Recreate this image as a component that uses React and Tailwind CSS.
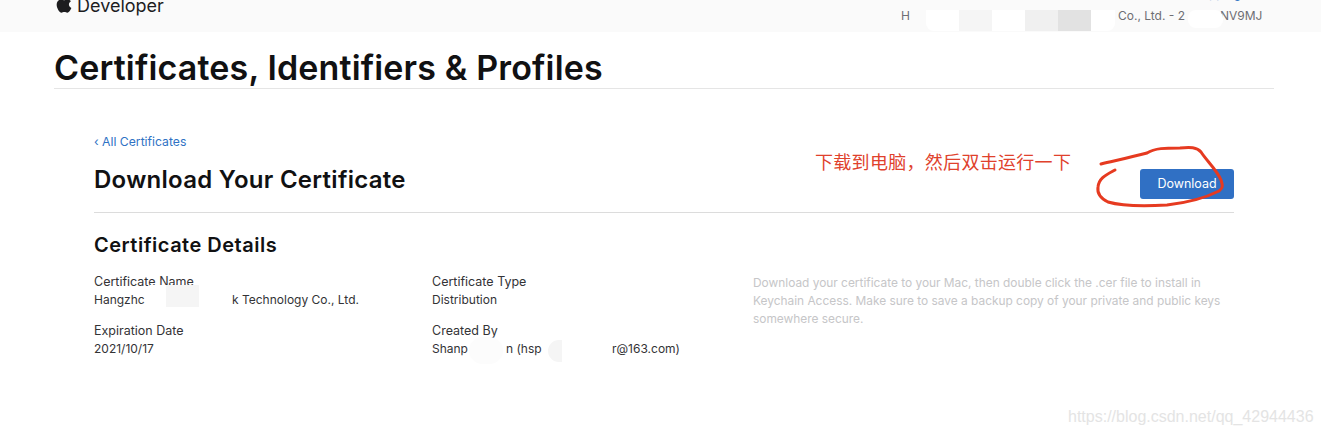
import { FaApple } from "react-icons/fa";

const fontInter = { fontFamily: "Inter, 'Noto Sans CJK SC', sans-serif" };

function Field({ label, children }) {
    return (
        <div className="flex flex-col">
            <span className="text-[12.5px] leading-[18px] text-[#333336]">{label}</span>
            <div className="flex items-start text-[12px] leading-[18px] whitespace-nowrap text-[#333336]">
                {children}
            </div>
        </div>
    );
}

export default function App() {
    return (
        <div className="relative h-[435px] w-[1321px] overflow-hidden bg-white" style={fontInter}>
            {/* Header band, scrolled so its top is cut off */}
            <header className="h-8 bg-[#fafafa]">
                <div className="flex h-3 items-center pl-[54px] pr-[80px] text-[#1d1d1f]">
                    <FaApple className="mr-[3px] -mt-[4px] h-5 w-5 shrink-0" />
                    <span className="text-[18px] leading-none">Developer</span>
                    <span className="ml-auto -mt-[14px] self-start text-[12px] leading-4 text-[#2f72c4]">Shipping</span>
                </div>
                <div className="-mt-1 flex items-start pl-[901px] text-[12px] leading-4 text-[#6e6e73]">
                    <span className="w-[25px]">H</span>
                    <div className="mt-[2px] h-[21px] w-[33px] rounded-bl-lg bg-white"></div>
                    <div className="mt-[2px] h-[21px] w-[33px] bg-[#f5f5f5]"></div>
                    <div className="mt-[2px] h-[21px] w-[33px] bg-white"></div>
                    <div className="mt-[2px] h-[21px] w-[33px] bg-[#f0f0f0]"></div>
                    <div className="mt-[2px] h-[21px] w-[33px] bg-[#e2e2e2]"></div>
                    <div className="mt-[2px] h-[21px] w-6 rounded-br-lg bg-white"></div>
                    <span className="ml-[3px] w-[70px]">Co., Ltd. - 2</span>
                    <div className="relative mt-[2px] -mr-[3px] h-[18px] w-[35px] rounded-lg bg-white"></div>
                    <span>NV9MJ</span>
                </div>
            </header>

            <main className="ml-[54px] w-[1220px]">
                <h1 className="flex h-[57px] items-end border-b border-[#e5e5e5] text-[34px] leading-[40px] font-semibold tracking-[0.15px] text-[#111112]">
                    Certificates, Identifiers &amp; Profiles
                </h1>

                <section className="mx-10 pt-11">
                    <a className="block text-[12.2px] leading-[18px] text-[#2f72c4]">‹ All Certificates</a>
                    <div className="mt-[14px] flex h-[48px] items-start border-b border-[#dcdcdc]">
                        <h2 className="text-[24px] leading-[30px] font-semibold tracking-[0.28px] text-[#111112]">
                            Download Your Certificate
                        </h2>
                        <button className="ml-auto mt-1 h-[30px] w-[94px] rounded-[3px] bg-[#3070c4] text-[12.5px] text-white">
                            Download
                        </button>
                    </div>

                    <h3 className="mt-[19px] text-[20px] leading-[26px] font-semibold tracking-[0.5px] text-[#111112]">
                        Certificate Details
                    </h3>

                    <div className="mt-[15px] grid grid-cols-[338px_321px_1fr]">
                        <div className="flex flex-col gap-[13px]">
                            <Field label="Certificate Name">
                                <span className="w-14">Hangzhc</span>
                                <div className="relative -mt-[6px] h-[22px] w-4 bg-white"></div>
                                <div className="relative -mt-[6px] h-[22px] w-[33px] bg-[#f5f5f5]"></div>
                                <span className="ml-[33px]">k Technology Co., Ltd.</span>
                            </Field>
                            <Field label="Expiration Date">2021/10/17</Field>
                        </div>
                        <div className="flex flex-col gap-[13px]">
                            <Field label="Certificate Type">Distribution</Field>
                            <Field label="Created By">
                                <span className="w-[37px]">Shanp</span>
                                <div className="relative -mt-[3px] h-[27px] w-[34px] rounded-full bg-[#fcfcfc]"></div>
                                <span className="w-[45px] pl-[3px]">n (hsp</span>
                                <div className="h-[22px] w-[14px] rounded-l-xl bg-[#f5f5f5]"></div>
                                <span className="ml-[50px]">r@163.com)</span>
                            </Field>
                        </div>
                        <p className="pt-[1px] text-[11.9px] leading-[18px] text-[#c6c6c8]">
                            Download your certificate to your Mac, then double click the .cer file to install in Keychain Access. Make sure to save a backup copy of your private and public keys somewhere secure.
                        </p>
                    </div>
                </section>
            </main>

            {/* Hand-written annotation */}
            <span className="absolute left-[815px] top-[149px] text-[18px] leading-6 tracking-[0.3px] text-[#e0412c]" style={{ fontFamily: "'Noto Sans CJK SC', sans-serif" }}>
                下载到电脑，然后双击运行一下
            </span>
            <svg className="pointer-events-none absolute left-0 top-0" width="1321" height="435" fill="none">
                <path
                    d="M1101 164 C1118 160 1132 157 1147 153 C1155 148 1165 148 1180 148 C1190 147 1197 147 1201 152 C1206 160 1217 170 1221 180 C1223 186 1223 188 1219 191 C1205 198 1185 203 1167 205 C1150 206 1125 207 1108 202 C1100 198 1097 193 1098 187 C1099 178 1106 175 1115 170"
                    stroke="#e63a20"
                    strokeWidth="3"
                    strokeLinecap="round"
                />
            </svg>

            {/* Blog watermark */}
            <span className="absolute left-[1068px] top-[406px] text-[16px] leading-[22px] text-[#e4e4e4]" style={{ fontFamily: "'Liberation Sans', sans-serif" }}>
                https://blog.csdn.net/qq_42944436
            </span>
        </div>
    );
}
